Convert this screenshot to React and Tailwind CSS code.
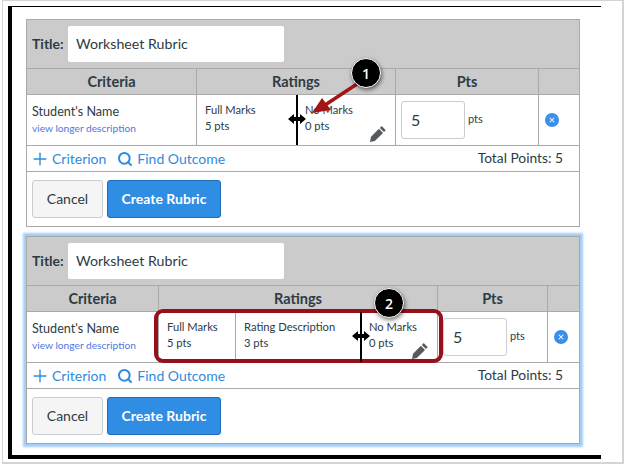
import React from 'react';
import { Plus, Search } from 'lucide-react';

const Pencil = ({ className }) => (
    <svg viewBox="1 1.5 14 14" className={className} fill="#555a5e">
        <path d="M11.2 1.6 14.8 5.2 13.2 6.8 9.6 3.2z" />
        <path d="M8.8 4 12.4 7.6 5.2 14.6 1 15.4 1.9 11z" />
    </svg>
);

const ResizeCursor = ({ className }) => (
    <svg viewBox="0 0 18 10" className={className}>
        <path d="M0 5 6 0V3H12V0L18 5 12 10V7H6V10z" fill="#000" />
    </svg>
);

const Callout = ({ n, className }) => (
    <div className={`absolute w-[30px] h-[30px] rounded-full bg-black border-[1.5px] border-white shadow-[1px_2px_4px_rgba(0,0,0,0.55)] text-white flex items-center justify-center text-[14px] font-semibold font-['Open_Sans',sans-serif] ${className}`}>
        {n}
    </div>
);

const RemoveButton = () => (
    <div className="w-[14px] h-[14px] rounded-full bg-[#3a8fe8] flex items-center justify-center">
        <svg viewBox="0 0 8 8" className="w-[6px] h-[6px]" stroke="#fff" strokeWidth="1.4">
            <path d="M1 1 7 7M7 1 1 7" />
        </svg>
    </div>
);

const Rating = ({ title, pts, className }) => (
    <div className={`pt-[7px] text-[11.2px] leading-[16px] text-[#2d3b45] ${className}`}>
        <div>{title}</div>
        <div>{pts}</div>
    </div>
);

const Rubric = ({ criteriaWidth, ratingsWidth, ptsWidth, removePad, glow, children }) => (
    <div className={`relative w-[554px] h-[208px] bg-white border border-[#a9a9a9] ${glow ? 'shadow-[0_0_2px_3px_#a3cdf7]' : ''}`}>
        <div className="h-[49px] bg-[#cbcbcb] border-b border-[#a9a9a9] flex items-center pl-[5px]">
            <span className="text-[14px] font-bold text-[#2d3b45] w-[36px] -mt-[2px]">Title:</span>
            <div className="w-[216px] h-[36px] bg-white rounded-[2px] flex items-center pl-[8px] text-[14.2px] text-[#2d3b45]">Worksheet Rubric</div>
        </div>

        <div className="h-[26px] bg-[#cbcbcb] border-b border-[#a9a9a9] flex text-[14.5px] font-bold text-[#2d3b45]">
            <div style={{ width: criteriaWidth }} className="border-r border-[#a9a9a9] flex items-center justify-center">Criteria</div>
            <div style={{ width: ratingsWidth }} className="border-r border-[#a9a9a9] flex items-center justify-center">Ratings</div>
            <div style={{ width: ptsWidth }} className="border-r border-[#a9a9a9] flex items-center justify-center">Pts</div>
        </div>

        <div className="h-[51px] border-b border-[#a9a9a9] flex">
            <div style={{ width: criteriaWidth }} className="border-r border-[#a9a9a9] pl-[5px] pt-[8px] shrink-0">
                <div className="text-[12.6px] leading-[18px] text-[#2d3b45]">Student's Name</div>
                <div className="text-[10.2px] leading-[15px] text-[#4f78e0]">view longer description</div>
            </div>
            <div style={{ width: ratingsWidth }} className="border-r border-[#a9a9a9] flex shrink-0">{children}</div>
            <div style={{ width: ptsWidth }} className="border-r border-[#a9a9a9] flex items-center pl-[5px] shrink-0">
                <div className="w-[64px] h-[38px] border border-[#c7cdd1] rounded-[3px] flex items-center pl-[9px] text-[16px] text-[#2d3b45]">5</div>
                <span className="ml-[3px] -mt-[2px] text-[11px] text-[#2d3b45]">pts</span>
            </div>
            <div style={{ paddingLeft: removePad }} className="flex-1 flex items-center"><RemoveButton /></div>
        </div>

        <div className="h-[26px] border-b border-[#a9a9a9] flex items-center pl-[3px] pr-[16px] text-[14px]">
            <Plus className="w-[20px] h-[20px] text-[#2f8ae0]" strokeWidth={1.7} />
            <span className="ml-[2px] text-[#2f8ae0]">Criterion</span>
            <Search className="ml-[11px] w-[16px] h-[16px] text-[#2f8ae0]" strokeWidth={3} />
            <span className="ml-[4px] text-[#2f8ae0]">Find Outcome</span>
            <span className="ml-auto text-[13.8px] text-[#2d3b45]">Total Points: 5</span>
        </div>

        <div className="flex items-start gap-[4px] pl-[5px] pt-[8px]">
            <div className="w-[71px] h-[38px] pb-[2px] bg-[#f5f5f5] border border-[#c7cdd1] rounded-[3px] flex items-center justify-center text-[14px] text-[#2d3b45]">Cancel</div>
            <div className="w-[114px] h-[38px] pb-[2px] bg-[#2f8de4] border border-[#1f6db8] rounded-[3px] flex items-center justify-center text-[14px] font-bold text-white">Create Rubric</div>
        </div>
    </div>
);

const App = () => (
    <div className="relative w-[626px] h-[466px] overflow-hidden bg-white font-['Lato',sans-serif]">
        <div className="w-[622px] h-[464px] ml-[2px] bg-white border-l border-r-2 border-b-2 border-t border-[#d4d4d4] pl-[5px] pt-[5px]">
            <div className="w-[593px] h-[453px] border-l-4 border-t border-b-4 border-black pl-[14px] pt-[12px] flex flex-col gap-[9px]">
                <Rubric criteriaWidth={170} ratingsWidth={199} ptsWidth={143} removePad={6}>
                    <Rating title="Full Marks" pts="5 pts" className="pl-[8px] w-[100px]" />
                    <Rating title="No Marks" pts="0 pts" className="pl-[8px] flex-1" />
                </Rubric>
                <Rubric criteriaWidth={132} ratingsWidth={279} ptsWidth={110} removePad={6} glow>
                    <Rating title="Full Marks" pts="5 pts" className="pl-[8px] w-[77px] border-r border-[#a9a9a9]" />
                    <Rating title="Rating Description" pts="3 pts" className="pl-[8px] w-[125px]" />
                    <Rating title="No Marks" pts="0 pts" className="pl-[8px] flex-1" />
                </Rubric>
            </div>
        </div>

        {/* annotations on top of the rubrics */}
        <div className="absolute left-[296px] top-[95px] w-[2px] h-[50px] bg-black" />
        <ResizeCursor className="absolute left-[288px] top-[114px] w-[18px] h-[10px]" />
        <Pencil className="absolute left-[370px] top-[126px] w-[16px] h-[16px]" />
        <svg className="absolute left-0 top-0 w-[626px] h-[466px] pointer-events-none" viewBox="0 0 626 466">
            <path d="M357 84 322 107" stroke="#a31515" strokeWidth="3.5" />
            <path d="M312 113 322 98 331 110z" fill="#a31515" />
        </svg>
        <Callout n="1" className="left-[351px] top-[58px]" />

        <div className="absolute left-[154px] top-[309px] w-[289px] h-[54px] rounded-[9px] border-4 border-[#96101a]" />
        <div className="absolute left-[360px] top-[312px] w-[2px] h-[50px] bg-black" />
        <ResizeCursor className="absolute left-[352px] top-[331px] w-[18px] h-[10px]" />
        <Pencil className="absolute left-[412px] top-[343px] w-[16px] h-[16px]" />
        <Callout n="2" className="left-[374px] top-[288px]" />
    </div>
);

export default App;
